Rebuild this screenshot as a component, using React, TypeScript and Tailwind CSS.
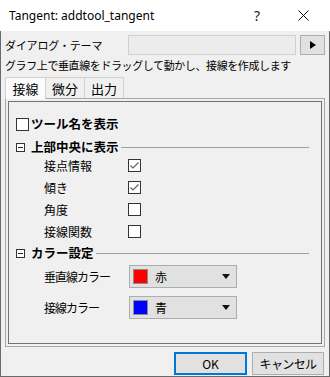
import React from "react";

const jp = { fontFamily: '"Noto Sans CJK JP", "Noto Sans", sans-serif' };

function Check({ checked }: { checked?: boolean }) {
  return (
    <div className="w-[13px] h-[13px] border border-[#333333] bg-white flex items-center justify-center">
      {checked ? (
        <svg width="11" height="11" viewBox="0 0 11 11">
          <polyline points="1.5,5.5 4,8 9.5,2.5" fill="none" stroke="#606060" strokeWidth="1.2" />
        </svg>
      ) : null}
    </div>
  );
}

function Collapse() {
  return (
    <div className="w-[9px] h-[9px] border border-[#333333] bg-white flex items-center justify-center">
      <div className="w-[5px] h-px bg-[#222222]" />
    </div>
  );
}

function Header({ label, top }: { label: string; top: string }) {
  return (
    <div className={`flex items-center h-[14px] pr-[12px] ${top}`}>
      <Collapse />
      <span className="ml-[6px] text-[12.5px] font-bold leading-none">{label}</span>
      <div className="flex-1 h-px bg-[#a0a0a0] ml-[2px]" />
    </div>
  );
}

function CheckRow({ label, checked, top }: { label: string; checked?: boolean; top: string }) {
  return (
    <div className={`flex items-center h-[13px] ${top}`}>
      <span className="w-[84px] pl-[28px] box-content text-[12px] leading-none whitespace-nowrap">{label}</span>
      <Check checked={checked} />
    </div>
  );
}

function ColorRow({ label, name, color, top }: { label: string; name: string; color: string; top: string }) {
  return (
    <div className={`flex items-center h-[23px] ${top}`}>
      <span className="w-[85px] pl-[28px] box-content text-[12px] tracking-[-1px] leading-none whitespace-nowrap">
        {label}
      </span>
      <div className="w-[108px] h-[23px] border border-[#adadad] bg-[#e1e1e1] flex items-center pl-[3px] pr-[6px]">
        <div className="w-[15px] h-[15px] border border-[#8c8c8c]" style={{ backgroundColor: color }} />
        <span className="ml-[7px] text-[12px] leading-none">{name}</span>
        <svg className="ml-auto" width="8" height="5" viewBox="0 0 8 5">
          <polygon points="0,0 8,0 4,5" fill="#111111" />
        </svg>
      </div>
    </div>
  );
}

export default function App() {
  return (
    <div className="w-[330px] h-[377px] bg-[#f0f0f0] flex flex-col text-black" style={jp}>
      <div className="h-[31px] bg-white flex items-center pl-[9px] shrink-0">
        <span className="text-[12px] leading-none" style={{ fontFamily: '"Noto Sans", sans-serif' }}>
          Tangent: addtool_tangent
        </span>
        <span
          className="ml-auto text-[14px] leading-none text-[#222222]"
          style={{ fontFamily: '"Noto Sans", sans-serif' }}
        >
          ?
        </span>
        <svg className="ml-[38px] mr-[21px]" width="11" height="11" viewBox="0 0 11 11">
          <path d="M0.5 0.5 L10.5 10.5 M10.5 0.5 L0.5 10.5" stroke="#111111" strokeWidth="1" />
        </svg>
      </div>

      <div className="flex-1 flex flex-col border-x border-b border-[#6a6a6a] px-[4px]">
        <div className="mt-[4px] h-[20px] flex items-center">
          <span className="text-[11px] tracking-[-0.2px] leading-none whitespace-nowrap">ダイアログ・テーマ</span>
          <div className="ml-auto w-[168px] h-[20px] border border-[#d0d0d0] bg-[#ececec]" />
          <div className="ml-[4px] w-[25px] h-[20px] border border-[#adadad] bg-[#e1e1e1] flex items-center justify-center">
            <svg width="6" height="8" viewBox="0 0 6 8">
              <polygon points="0,0 6,4 0,8" fill="#000000" />
            </svg>
          </div>
        </div>

        <div className="mt-[3px] h-[14px] flex items-center">
          <span className="text-[11px] tracking-[-0.4px] leading-none whitespace-nowrap">
            グラフ上で垂直線をドラッグして動かし、接線を作成します
          </span>
        </div>

        <div className="mt-[5px] flex h-[21px] relative z-10">
          <div className="w-[41px] h-[22px] border border-b-0 border-[#d0d0d0] bg-[#fbfbfb] flex items-center justify-center text-[13px] leading-none">
            接線
          </div>
          <div className="w-[39px] h-[21px] border-t border-r border-[#d0d0d0] flex items-center justify-center text-[13px] leading-none">
            微分
          </div>
          <div className="w-[39px] h-[21px] border-t border-r border-[#d0d0d0] flex items-center justify-center text-[13px] leading-none">
            出力
          </div>
        </div>

        <div className="h-[249px] border border-[#a8a8a8] p-[2px]">
          <div className="h-full border border-[#737373] flex flex-col pl-[7px]">
            <div className="mt-[16px] flex items-center h-[13px]">
              <Check />
              <span className="ml-[2px] text-[12.5px] font-bold leading-none">ツール名を表示</span>
            </div>

            <Header label="上部中央に表示" top="mt-[9px]" />
            <CheckRow label="接点情報" checked top="mt-[5px]" />
            <CheckRow label="傾き" checked top="mt-[9px]" />
            <CheckRow label="角度" top="mt-[9px]" />
            <CheckRow label="接線関数" top="mt-[9px]" />

            <Header label="カラー設定" top="mt-[8px]" />
            <ColorRow label="垂直線カラー" name="赤" color="#ff0000" top="mt-[5px]" />
            <ColorRow label="接線カラー" name="青" color="#0000ff" top="mt-[8px]" />
          </div>
        </div>

        <div className="mt-[5px] flex justify-end pr-[1px]">
          <div className="w-[73px] h-[23px] border-2 border-[#0078d7] bg-[#e1e1e1] flex items-center justify-center text-[12px] leading-none">
            OK
          </div>
          <div className="ml-[5px] w-[72px] h-[23px] border border-[#adadad] bg-[#e1e1e1] flex items-center justify-center text-[12px] tracking-[-0.6px] leading-none">
            キャンセル
          </div>
        </div>
      </div>
    </div>
  );
}
